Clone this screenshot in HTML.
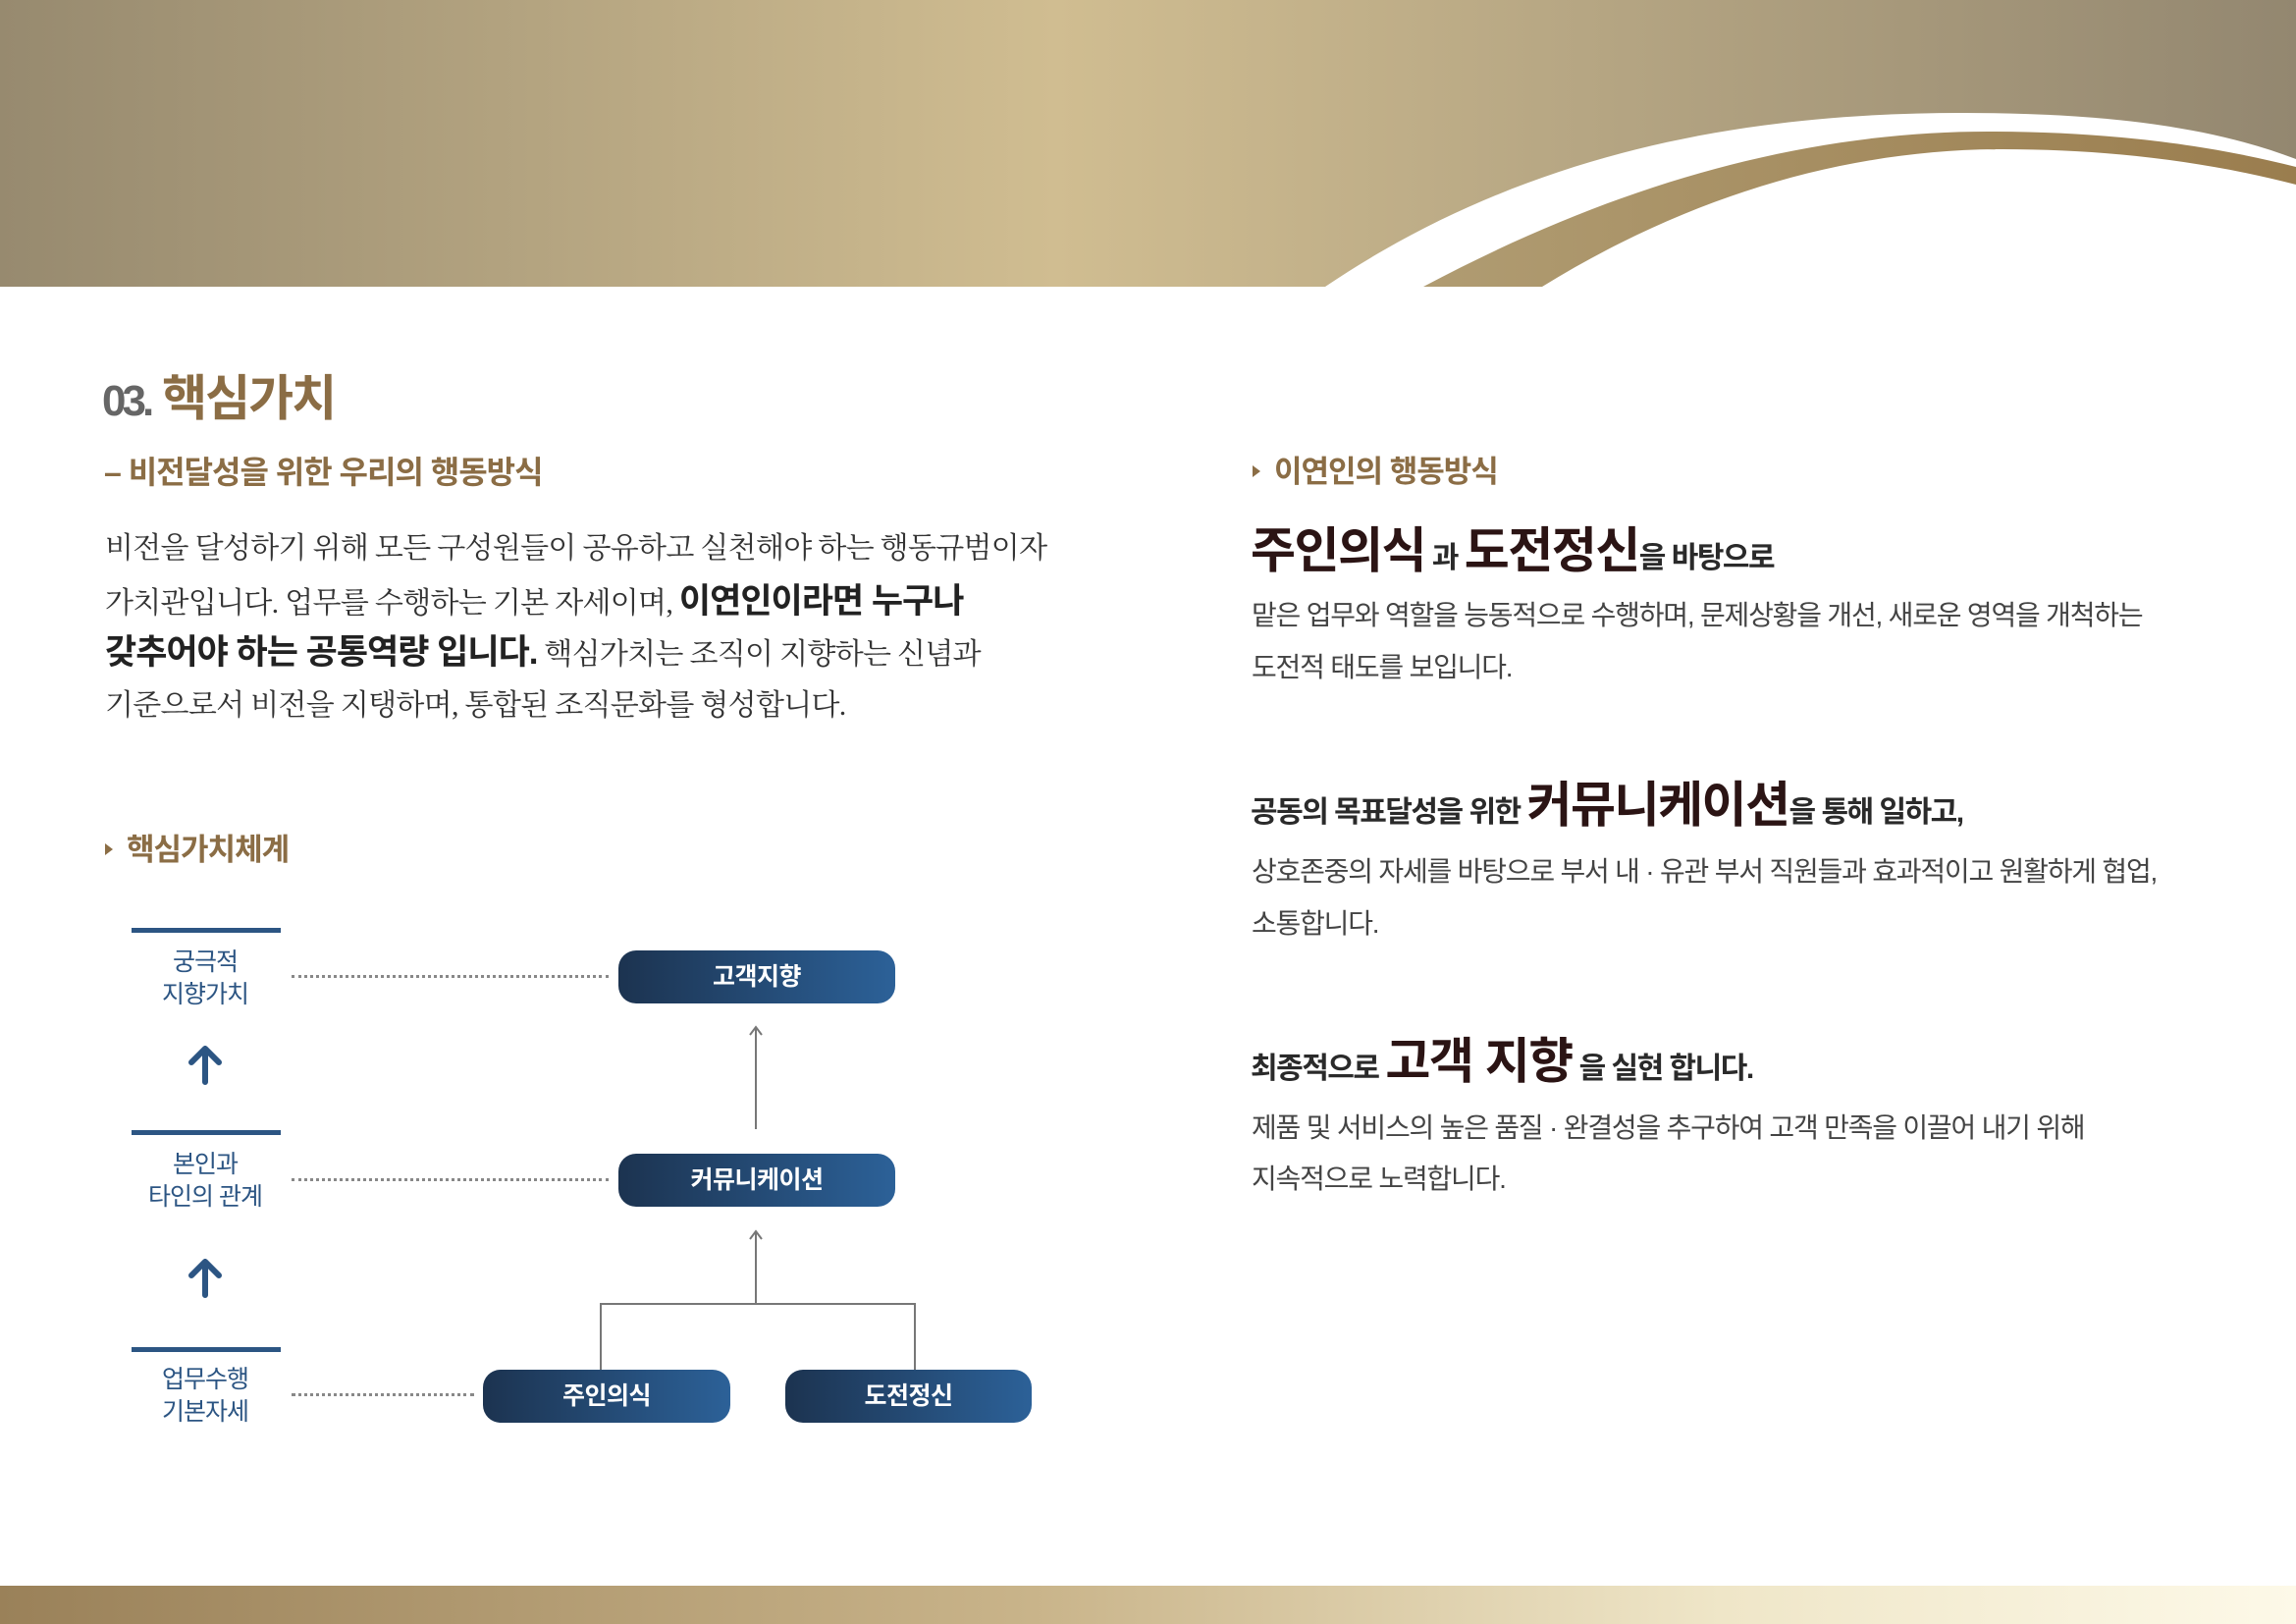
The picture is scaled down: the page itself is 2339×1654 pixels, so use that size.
<!DOCTYPE html>
<html><head><meta charset="utf-8">
<style>
*{margin:0;padding:0;box-sizing:border-box}
html,body{width:2339px;height:1654px;overflow:hidden;background:#fff}
body{position:relative;font-family:"Liberation Sans","Noto Sans CJK KR",sans-serif}
.a{position:absolute;white-space:nowrap}
.gold{color:#8b6d45;font-weight:bold}
.ser{font-family:"Liberation Serif","Noto Serif CJK SC",serif;font-size:30px;color:#333;letter-spacing:-0.7px;line-height:40px}
.ser b{font-family:"Liberation Sans","Noto Sans CJK KR",sans-serif;font-size:35px;color:#222;letter-spacing:-1px}
.p{font-size:28px;color:#444;letter-spacing:-1.2px;line-height:40px}
.h{font-weight:bold;color:#2a2a2a;letter-spacing:-1.5px;line-height:60px;font-size:30px}
.h .big{color:#2b1414;font-size:50px}
.lbl{color:#2c5583;font-size:25px;text-align:center;line-height:33px;letter-spacing:-1px;width:200px}
.bar{position:absolute;left:134px;width:152px;height:5px;background:#2c5583}
.box{position:absolute;height:54px;border-radius:18px;background:linear-gradient(90deg,#1c3350,#2c6198);color:#fff;font-size:25px;font-weight:bold;text-align:center;line-height:54px;letter-spacing:-0.5px}
.dot{position:absolute;height:0;border-top:3px dotted #888}
.tri{display:inline-block;width:0;height:0;border-left:8px solid #8b6d45;border-top:6px solid transparent;border-bottom:6px solid transparent;margin-right:14px;vertical-align:middle;position:relative;top:-3px}
</style></head><body>
<svg class="a" style="left:0;top:0" width="2339" height="292" viewBox="0 0 2339 292">
<defs>
<linearGradient id="g" x1="0" x2="1"><stop offset="0" stop-color="#978a6f"/><stop offset="0.46" stop-color="#d0bd91"/><stop offset="1" stop-color="#938770"/></linearGradient>
<linearGradient id="g2" x1="0" x2="1"><stop offset="0" stop-color="#b09c72"/><stop offset="1" stop-color="#9a7d4e"/></linearGradient>
</defs>
<rect width="2339" height="292" fill="url(#g)"/>
<path d="M1350 292 C1560 150 1790 115 1999 115 C2140 115 2250 128 2339 162 L2339 292 Z" fill="#fff"/>
<path d="M1450 292 C1670 175 1860 134 2025 134 C2160 134 2260 150 2339 170 L2339 188 C2250 165 2150 152 2040 152 C1880 152 1720 200 1571 292 Z" fill="url(#g2)"/>
</svg>
<div class="a" style="left:0;top:1615px;width:2339px;height:39px;background:linear-gradient(90deg,#9a8159,#c9b48a 45%,#efe6c8 75%,#fdf9e8)"></div>

<div class="a" style="left:104px;top:376px;font-size:50px;line-height:60px;font-weight:bold;letter-spacing:-2px"><span style="color:#666;font-size:44px;letter-spacing:-4px">03.</span> <span style="color:#8b6d45">핵심가치</span></div>
<div class="a gold" style="left:106px;top:461px;font-size:32px;line-height:40px;letter-spacing:-1px">– 비전달성을 위한 우리의 행동방식</div>
<div class="a ser" style="left:107px;top:539px">비전을 달성하기 위해 모든 구성원들이 공유하고 실천해야 하는 행동규범이자</div>
<div class="a ser" style="left:107px;top:593px">가치관입니다. 업무를 수행하는 기본 자세이며, <b>이연인이라면 누구나</b></div>
<div class="a ser" style="left:107px;top:645px"><b>갖추어야 하는 공통역량 입니다.</b> 핵심가치는 조직이 지향하는 신념과</div>
<div class="a ser" style="left:107px;top:699px">기준으로서 비전을 지탱하며, 통합된 조직문화를 형성합니다.</div>

<div class="a gold" style="left:107px;top:846px;font-size:31px;line-height:40px;letter-spacing:-1px"><span class="tri"></span>핵심가치체계</div>

<div class="bar" style="top:945px"></div>
<div class="bar" style="top:1151px"></div>
<div class="bar" style="top:1372px"></div>
<div class="a lbl" style="left:109px;top:964px">궁극적<br>지향가치</div>
<div class="a lbl" style="left:109px;top:1170px">본인과<br>타인의 관계</div>
<div class="a lbl" style="left:109px;top:1389px">업무수행<br>기본자세</div>
<svg class="a" style="left:185px;top:1060px" width="50" height="270">
<g stroke="#2c5583" stroke-width="6" fill="none" stroke-linecap="round" stroke-linejoin="round">
<path d="M24 42 V8 M10 22 L24 8 L38 22"/>
<path d="M24 259 V225 M10 239 L24 225 L38 239"/>
</g></svg>
<div class="dot" style="left:297px;width:323px;top:993px"></div>
<div class="dot" style="left:297px;width:323px;top:1200px"></div>
<div class="dot" style="left:297px;width:186px;top:1419px"></div>
<div class="box" style="left:630px;top:968px;width:282px">고객지향</div>
<div class="box" style="left:630px;top:1175px;width:282px">커뮤니케이션</div>
<div class="box" style="left:492px;top:1395px;width:252px">주인의식</div>
<div class="box" style="left:800px;top:1395px;width:251px">도전정신</div>
<svg class="a" style="left:600px;top:1030px" width="350" height="370">
<g stroke="#777" stroke-width="2" fill="none">
<path d="M170 120 V16 M164 24 L170 16 L176 24"/>
<path d="M170 298 V224 M164 232 L170 224 L176 232"/>
<path d="M12 365 V298 H332 V365"/>
</g></svg>

<div class="a gold" style="left:1276px;top:461px;font-size:31px;line-height:40px;letter-spacing:-1px"><span class="tri"></span>이연인의 행동방식</div>
<div class="a h" style="left:1274px;top:531px"><span class="big">주인의식</span> 과 <span class="big">도전정신</span>을 바탕으로</div>
<div class="a p" style="left:1275px;top:607px">맡은 업무와 역할을 능동적으로 수행하며, 문제상황을 개선, 새로운 영역을 개척하는</div>
<div class="a p" style="left:1275px;top:660px">도전적 태도를 보입니다.</div>
<div class="a h" style="left:1274px;top:790px">공동의 목표달성을 위한 <span class="big">커뮤니케이션</span>을 통해 일하고,</div>
<div class="a p" style="left:1275px;top:868px">상호존중의 자세를 바탕으로 부서 내 · 유관 부서 직원들과 효과적이고 원활하게 협업,</div>
<div class="a p" style="left:1275px;top:921px">소통합니다.</div>
<div class="a h" style="left:1274px;top:1051px">최종적으로 <span class="big">고객 지향</span> 을 실현 합니다.</div>
<div class="a p" style="left:1275px;top:1129px">제품 및 서비스의 높은 품질 · 완결성을 추구하여 고객 만족을 이끌어 내기 위해</div>
<div class="a p" style="left:1275px;top:1181px">지속적으로 노력합니다.</div>
</body></html>
